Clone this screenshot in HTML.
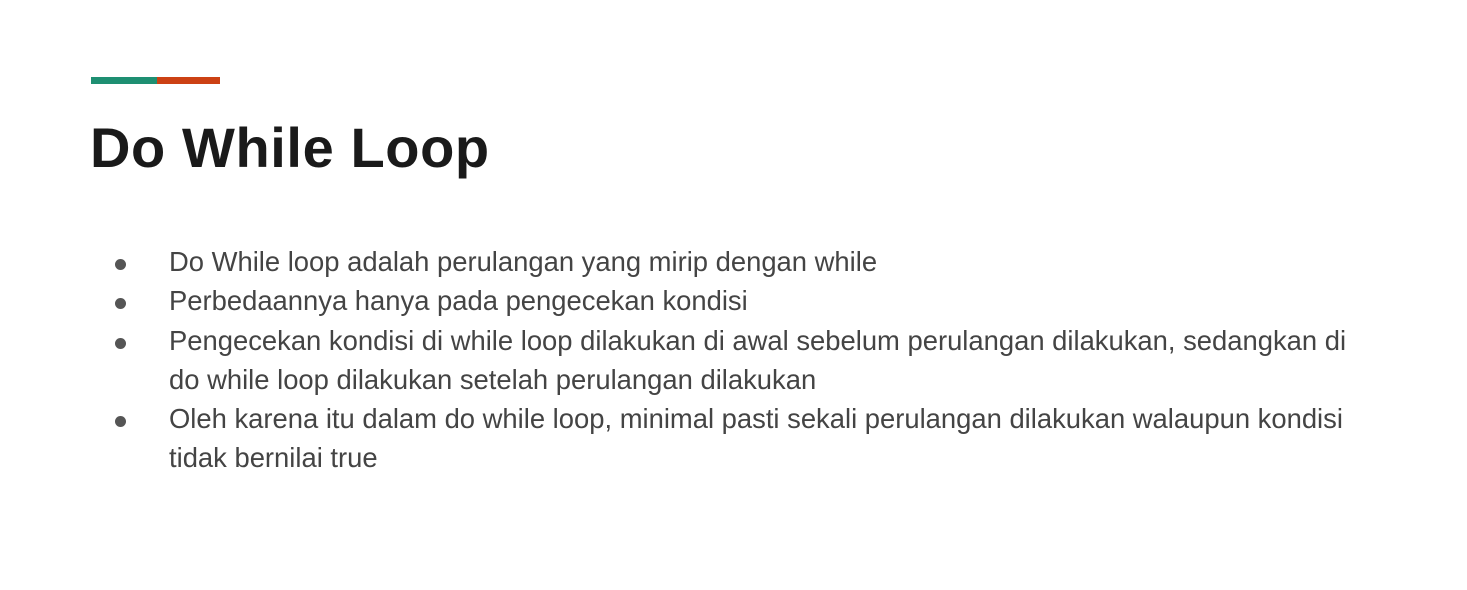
<!DOCTYPE html>
<html><head><meta charset="utf-8"><style>
html,body{margin:0;padding:0;background:#fff;width:1467px;height:590px;overflow:hidden;font-family:"Liberation Sans",sans-serif}
.bar{position:absolute;top:77px;height:7px}
h1{position:absolute;left:90px;top:115px;margin:0;font-size:56px;font-weight:bold;color:#1a1a1a;letter-spacing:0.6px;white-space:nowrap}
.l{position:absolute;left:169px;font-size:27.4px;color:#444;white-space:nowrap;letter-spacing:0}
.b{position:absolute;left:115px;width:11px;height:11px;border-radius:50%;background:#555}
</style></head><body>
<div class="bar" style="left:91px;width:66px;background:#1e8f72"></div>
<div class="bar" style="left:157px;width:63px;background:#cc4114"></div>
<h1>Do While Loop</h1>
<div class="b" style="top:259px"></div>
<div class="b" style="top:298px"></div>
<div class="b" style="top:338px"></div>
<div class="b" style="top:416px"></div>
<div class="l" style="top:246px">Do While loop adalah perulangan yang mirip dengan while</div>
<div class="l" style="top:285px">Perbedaannya hanya pada pengecekan kondisi</div>
<div class="l" style="top:325px">Pengecekan kondisi di while loop dilakukan di awal sebelum perulangan dilakukan, sedangkan di</div>
<div class="l" style="top:364px">do while loop dilakukan setelah perulangan dilakukan</div>
<div class="l" style="top:403px">Oleh karena itu dalam do while loop, minimal pasti sekali perulangan dilakukan walaupun kondisi</div>
<div class="l" style="top:442px">tidak bernilai true</div>
</body></html>
